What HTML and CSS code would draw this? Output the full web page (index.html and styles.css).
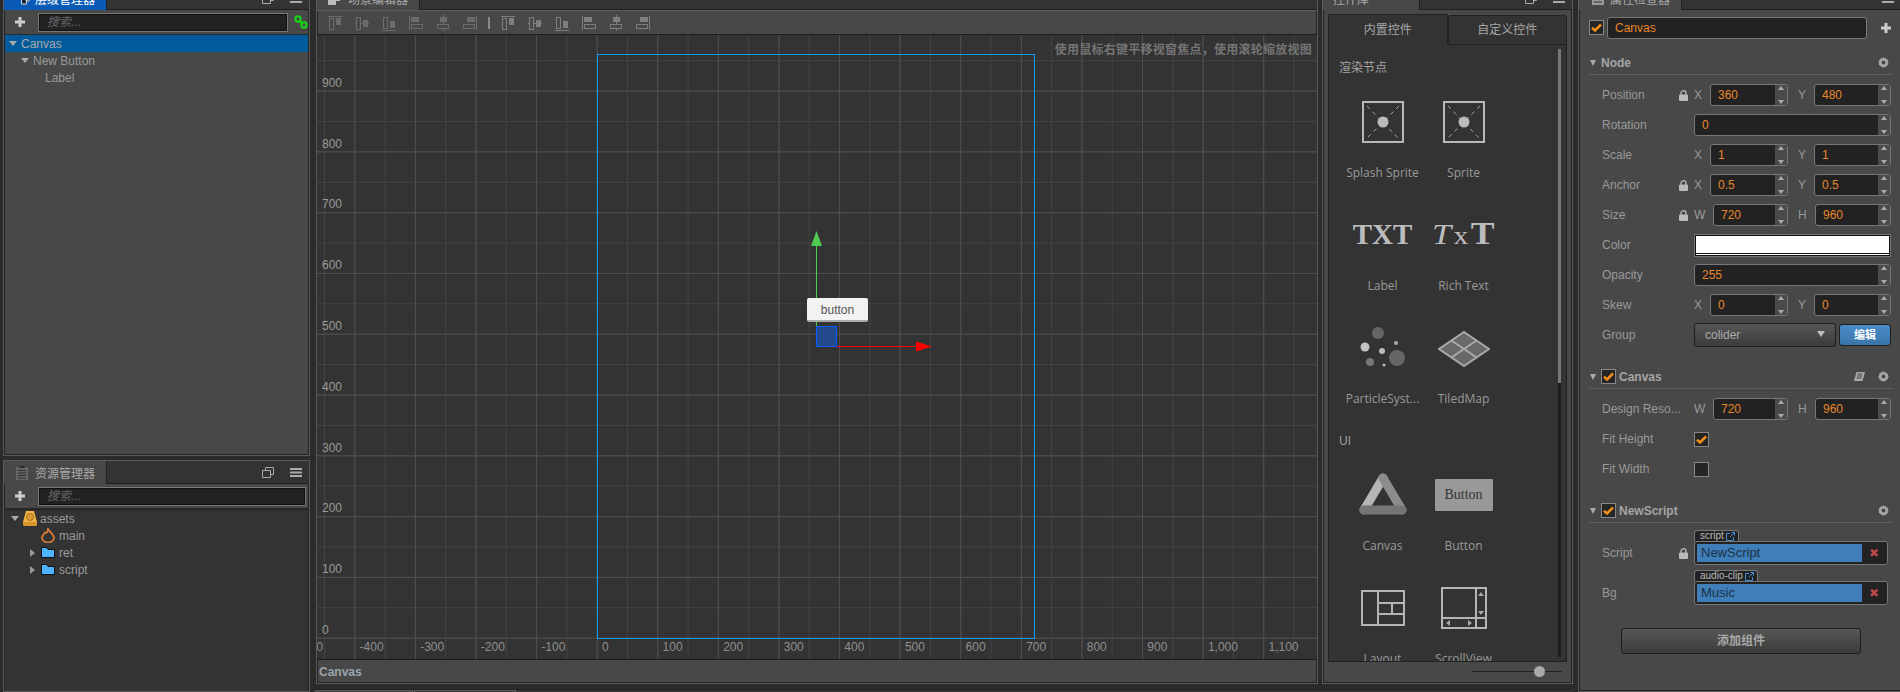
FILE: index.html
```html
<!DOCTYPE html>
<html lang="zh">
<head>
<meta charset="utf-8">
<title>Cocos Creator</title>
<link rel="stylesheet" href="styles.css">
</head>
<body>
<svg class="defs" width="0" height="0" aria-hidden="true">
  <defs>
    <symbol id="a-top" viewBox="0 0 16 16"><path d="M1 1.5h14" stroke="currentColor" fill="none"/><rect x="2.5" y="3.5" width="4" height="11" stroke="currentColor" fill="none"/><rect x="9" y="3" width="5" height="7" fill="currentColor"/></symbol>
    <symbol id="a-mid" viewBox="0 0 16 16"><path d="M1 8.5h14" stroke="currentColor" fill="none"/><rect x="2.5" y="2.5" width="4" height="12" stroke="currentColor" fill="#484848"/><rect x="9" y="5" width="5" height="7" fill="currentColor"/></symbol>
    <symbol id="a-bot" viewBox="0 0 16 16"><path d="M1 15.5h14" stroke="currentColor" fill="none"/><rect x="2.5" y="2.5" width="4" height="11" stroke="currentColor" fill="none"/><rect x="9" y="6" width="5" height="7" fill="currentColor"/></symbol>
    <symbol id="a-left" viewBox="0 0 16 16"><path d="M1.5 1v14" stroke="currentColor" fill="none"/><rect x="3" y="2" width="8" height="5" fill="currentColor"/><rect x="3.5" y="9.5" width="11" height="4" stroke="currentColor" fill="none"/></symbol>
    <symbol id="a-center" viewBox="0 0 16 16"><path d="M8.5 0v16" stroke="currentColor" fill="none"/><rect x="5" y="2" width="7" height="5" fill="currentColor"/><rect x="2.5" y="9.5" width="11" height="4" stroke="currentColor" fill="#484848"/></symbol>
    <symbol id="a-right" viewBox="0 0 16 16"><path d="M14.5 1v14" stroke="currentColor" fill="none"/><rect x="5" y="2" width="8" height="5" fill="currentColor"/><rect x="1.5" y="9.5" width="11" height="4" stroke="currentColor" fill="none"/></symbol>
    <symbol id="popout" viewBox="0 0 12 11"><path d="M3.5 3V.5h8v7H9M.5 3.5h8v7h-8z" stroke="currentColor" fill="none"/></symbol>
    <symbol id="burger" viewBox="0 0 12 9"><path d="M0 0h12v2H0zM0 3.500h12v2H0zM0 7h12v2H0z" fill="currentColor"/></symbol>
    <symbol id="plus" viewBox="0 0 10 10"><path d="M3.500 0h3v3.500H10v3H6.500V10h-3V6.500H0v-3h3.500z" fill="currentColor"/></symbol>
    <symbol id="gear" viewBox="0 0 12 12"><path d="M6 0l1 1.600 1.800-.5.500 1.800 1.800.5-.5 1.800L12 6l-1.400.9.500 1.800-1.800.5-.5 1.800-1.800-.5L6 12l-1-1.500-1.800.5-.5-1.800-1.800-.5.500-1.800L0 6l1.400-.9-.5-1.800 1.800-.5.500-1.800 1.800.5z M6 3.800a2.200 2.200 0 1 0 .01 0z" fill="currentColor" fill-rule="evenodd"/></symbol>
    <symbol id="lock" viewBox="0 0 9 11"><path d="M2 5V3.200a2.500 2.500 0 0 1 5 0V5" stroke="currentColor" stroke-width="1.300" fill="none"/><rect y="4.500" width="9" height="6.500" rx="1" fill="currentColor"/></symbol>
    <symbol id="check" viewBox="0 0 13 13"><path d="M2 6.800l3 2.700L11 3.500" stroke="#f28c1e" stroke-width="2.600" fill="none"/></symbol>
    <symbol id="folder" viewBox="0 0 14 11"><path d="M.5.500h5l1.500 2h6.500v8H.5z" fill="#4db4fb" stroke="#111"/></symbol>
    <symbol id="ext" viewBox="0 0 9 9"><path d="M4 1.500H.5v7h7V5M4 5l4.500-4.500M5.500.500h3v3" stroke="#3f8fd6" fill="none"/></symbol>
    <symbol id="sprite" viewBox="0 0 42 42"><rect x="1" y="1" width="40" height="40" fill="none" stroke="#b8b8b8" stroke-width="2"/><path d="M5 5l31 32M37 5L5 37" stroke="#a8a8a8" stroke-dasharray="4 4" fill="none"/><circle cx="21" cy="21" r="5.500" fill="#bbb"/></symbol>
  </defs>
</svg>

<div class="app">
  <div class="col-left">
    <section class="panel hierarchy">
      <div class="tabbar">
        <div class="tab tab-active">
          <svg class="tab-icon" width="9" height="12" viewBox="0 0 9 12"><path d="M.5 1h5v10h-5zM5 5h3v3H5z" fill="#123" stroke="#ddd"/></svg>
          <span>层级管理器</span>
        </div>
        <div class="tab-tools"><svg class="t-pop"><use href="#popout"/></svg><svg class="t-bur"><use href="#burger"/></svg></div>
      </div>
      <div class="toolbar">
        <svg class="plus"><use href="#plus"/></svg>
        <div class="search search-short">搜索...</div>
        <svg class="link" width="14" height="14" viewBox="0 0 14 14"><circle cx="4" cy="4" r="2.700" fill="none" stroke="#16d816" stroke-width="2"/><circle cx="10" cy="10" r="2.700" fill="none" stroke="#16d816" stroke-width="2"/><path d="M5.500 5.500l3 3" stroke="#16d816" stroke-width="2"/></svg>
      </div>
      <div class="tree">
        <div class="tree-row selected"><i class="caret"></i><span>Canvas</span></div>
        <div class="tree-row depth1"><i class="caret"></i><span>New Button</span></div>
        <div class="tree-row depth2"><span>Label</span></div>
      </div>
    </section>

    <section class="panel assets">
      <div class="tabbar">
        <div class="tab">
          <svg class="tab-icon" width="12" height="14" viewBox="0 0 12 14"><path d="M0 1h12v13H0z" fill="#666"/><path d="M3 0h6v2H3zM2 4h8v1H2zM2 6.500h8v1H2zM2 9h8v1H2zM2 11.500h8v1H2z" fill="#2e2e2e"/></svg>
          <span>资源管理器</span>
        </div>
        <div class="tab-tools"><svg class="t-pop"><use href="#popout"/></svg><svg class="t-bur"><use href="#burger"/></svg></div>
      </div>
      <div class="toolbar">
        <svg class="plus"><use href="#plus"/></svg>
        <div class="search">搜索...</div>
      </div>
      <div class="tree tree-dark">
        <div class="tree-row a0"><i class="caret"></i>
          <svg class="a-icon" width="14" height="15" viewBox="0 0 14 15"><path d="M3 0h8l3 11v2l-1 2H1l-1-2V11z" fill="#efb343"/><path d="M0 11h14v2l-1 2H1l-1-2z" fill="#d8962d"/><circle cx="7" cy="6" r="3.500" fill="#d99a33" stroke="#a87320"/></svg>
          <span>assets</span></div>
        <div class="tree-row a1"><svg class="a-icon" width="14" height="15" viewBox="0 0 14 15"><path d="M7 1C8.500 4 13 6.500 13 10a6 4.500 0 0 1-12 0C1 7 3.500 6 4 4.500 5.500 6 6.500 4 7 1z" fill="none" stroke="#dd7a35" stroke-width="1.700"/></svg><span>main</span></div>
        <div class="tree-row a1 closed"><i class="caret-r"></i><svg class="a-icon" width="14" height="11"><use href="#folder"/></svg><span>ret</span></div>
        <div class="tree-row a1 closed"><i class="caret-r"></i><svg class="a-icon" width="14" height="11"><use href="#folder"/></svg><span>script</span></div>
      </div>
    </section>
  </div>

  <div class="col-mid">
    <div class="mid-row">
      <section class="panel scene-panel">
        <div class="tabbar">
          <div class="tab">
            <svg class="tab-icon" width="12" height="12" viewBox="0 0 12 12"><path d="M0 0h12v8H8v4H0z" fill="#bbb"/></svg>
            <span>场景编辑器</span>
          </div>
        </div>
        <div class="toolbar scene-tools">
          <svg class="al dim"><use href="#a-top"/></svg>
          <svg class="al dim"><use href="#a-mid"/></svg>
          <svg class="al dim"><use href="#a-bot"/></svg>
          <svg class="al dim"><use href="#a-left"/></svg>
          <svg class="al dim"><use href="#a-center"/></svg>
          <svg class="al dim"><use href="#a-right"/></svg>
          <i class="tool-sep"></i>
          <svg class="al"><use href="#a-top"/></svg>
          <svg class="al"><use href="#a-mid"/></svg>
          <svg class="al"><use href="#a-bot"/></svg>
          <svg class="al"><use href="#a-left"/></svg>
          <svg class="al"><use href="#a-center"/></svg>
          <svg class="al"><use href="#a-right"/></svg>
        </div>
        <div class="scene">
          <div class="ruler-y"><span>900</span><span>800</span><span>700</span><span>600</span><span>500</span><span>400</span><span>300</span><span>200</span><span>100</span><span>0</span></div>
          <div class="ruler-x"><span>-500</span><span>-400</span><span>-300</span><span>-200</span><span>-100</span><span>0</span><span>100</span><span>200</span><span>300</span><span>400</span><span>500</span><span>600</span><span>700</span><span>800</span><span>900</span><span>1,000</span><span>1,100</span></div>
          <div class="design-rect"></div>
          <svg class="gizmo" width="130" height="130" viewBox="0 0 130 130">
            <path d="M10.500 14v101" stroke="#4fcb52" fill="none"/>
            <path d="M10.500 0L16 15H5z" fill="#4fcb52"/>
            <path d="M10 115.500h102" stroke="#f00" fill="none"/>
            <path d="M126 115.500L110 110.500v10z" fill="#f00"/>
          </svg>
          <div class="node-btn">button</div>
          <div class="node-anchor"></div>
          <div class="scene-hint">使用鼠标右键平移视窗焦点，使用滚轮缩放视图</div>
        </div>
        <div class="statusbar">Canvas</div>
      </section>

      <section class="panel widgets">
        <div class="tabbar">
          <div class="tab tab-widget"><span>控件库</span></div>
          <div class="tab-tools"><svg class="t-pop"><use href="#popout"/></svg><svg class="t-bur"><use href="#burger"/></svg></div>
        </div>
        <div class="w-tabs">
          <div class="w-tab w-tab-on">内置控件</div>
          <div class="w-tab">自定义控件</div>
        </div>
        <div class="w-body">
          <i class="w-scroll"></i>
          <h4 class="w-title">渲染节点</h4>
          <div class="w-grid">
            <div class="w-item"><div class="w-icon"><svg width="42" height="42"><use href="#sprite"/></svg></div><p>Splash Sprite</p></div>
            <div class="w-item"><div class="w-icon"><svg width="42" height="42"><use href="#sprite"/></svg></div><p>Sprite</p></div>
            <div class="w-item"><div class="w-icon"><span class="txt">TXT</span></div><p>Label</p></div>
            <div class="w-item"><div class="w-icon"><span class="rich"><em>T</em><small>x</small><b>T</b></span></div><p>Rich Text</p></div>
            <div class="w-item"><div class="w-icon"><svg class="nudge" width="48" height="48" viewBox="0 0 48 48"><circle cx="19" cy="8" r="6" fill="#666"/><circle cx="6" cy="22" r="4.500" fill="#c4c4c4"/><circle cx="23" cy="26" r="3" fill="#bbb"/><circle cx="37" cy="18" r="2" fill="#aaa"/><circle cx="38" cy="33" r="8" fill="#666"/><circle cx="11" cy="37" r="4" fill="#777"/><circle cx="25" cy="40" r="1.500" fill="#bbb"/></svg></div><p>ParticleSyst...</p></div>
            <div class="w-item"><div class="w-icon"><svg class="nudge" width="52" height="36" viewBox="0 0 52 36"><path d="M26 1l25 17-25 17L1 18z" fill="#696969" stroke="#aaa" stroke-width="2"/><path d="M13.500 9.500l25 17M38.500 9.500l-25 17" stroke="#aaa" stroke-width="2"/></svg></div><p>TiledMap</p></div>
          </div>
          <h4 class="w-title w-title-2">UI</h4>
          <div class="w-grid">
            <div class="w-item"><div class="w-icon"><svg width="48" height="44" viewBox="0 0 48 44"><path d="M5 37L24 5" stroke="#b5b5b5" stroke-width="9" stroke-linecap="round"/><path d="M24 5l19 32" stroke="#8c8c8c" stroke-width="9" stroke-linecap="round"/><path d="M5 37h38" stroke="#757575" stroke-width="9" stroke-linecap="round"/></svg></div><p>Canvas</p></div>
            <div class="w-item"><div class="w-icon"><span class="btn-icon">Button</span></div><p>Button</p></div>
            <div class="w-item"><div class="w-icon"><svg width="44" height="36" viewBox="0 0 44 36"><path d="M1 1h42v34H1zM17 1v34M17 13h26M17 24h26M31 13v11" fill="none" stroke="#b5b5b5" stroke-width="2"/></svg></div><p>Layout</p></div>
            <div class="w-item"><div class="w-icon"><svg width="46" height="42" viewBox="0 0 46 42"><path d="M1 1h44v40H1zM35 1v40M1 31h44" fill="none" stroke="#b5b5b5" stroke-width="2"/><path d="M40 5l3 4h-6zM40 28l-3-4h6zM5 36l4-3v6zM31 36l-4-3v6z" fill="#aaa"/></svg></div><p>ScrollView</p></div>
          </div>
        </div>
        <div class="w-foot"><div class="slider"><i class="thumb"></i></div></div>
      </section>
    </div>
    <div class="bottom-tabs"><i class="b-tab b1"></i><i class="b-tab b2"></i></div>
  </div>

  <section class="panel inspector">
    <div class="tabbar">
      <div class="tab">
        <svg class="tab-icon" width="12" height="12" viewBox="0 0 12 12"><path d="M0 0h12v12H0z" fill="#999"/><path d="M2 3h8M2 6h8M2 9h8" stroke="#333"/></svg>
        <span>属性检查器</span>
      </div>
      <div class="tab-tools"><svg class="t-bur"><use href="#burger"/></svg></div>
    </div>
    <div class="i-head">
      <span class="cb on"><svg><use href="#check"/></svg></span>
      <div class="name-input">Canvas</div>
      <svg class="plus i-plus"><use href="#plus"/></svg>
    </div>

    <div class="sec-head">
      <i class="sec-arrow"></i><b>Node</b>
      <svg class="gear"><use href="#gear"/></svg>
    </div>
    <div class="sec-body">
      <div class="row"><div class="lab"><span>Position</span><svg class="lock"><use href="#lock"/></svg></div><div class="val"><span class="ax">X</span><div class="num w78"><span>360</span><i class="spin"></i></div><span class="ax ax2">Y</span><div class="num w77"><span>480</span><i class="spin"></i></div></div></div>
      <div class="row"><div class="lab"><span>Rotation</span></div><div class="val"><div class="num wfull"><span>0</span><i class="spin"></i></div></div></div>
      <div class="row"><div class="lab"><span>Scale</span></div><div class="val"><span class="ax">X</span><div class="num w78"><span>1</span><i class="spin"></i></div><span class="ax ax2">Y</span><div class="num w77"><span>1</span><i class="spin"></i></div></div></div>
      <div class="row"><div class="lab"><span>Anchor</span><svg class="lock"><use href="#lock"/></svg></div><div class="val"><span class="ax">X</span><div class="num w78"><span>0.5</span><i class="spin"></i></div><span class="ax ax2">Y</span><div class="num w77"><span>0.5</span><i class="spin"></i></div></div></div>
      <div class="row"><div class="lab"><span>Size</span><svg class="lock"><use href="#lock"/></svg></div><div class="val"><span class="ax axw">W</span><div class="num w75"><span>720</span><i class="spin"></i></div><span class="ax ax2 axh">H</span><div class="num w76"><span>960</span><i class="spin"></i></div></div></div>
      <div class="row"><div class="lab"><span>Color</span></div><div class="val"><div class="color"></div></div></div>
      <div class="row"><div class="lab"><span>Opacity</span></div><div class="val"><div class="num wfull"><span>255</span><i class="spin"></i></div></div></div>
      <div class="row"><div class="lab"><span>Skew</span></div><div class="val"><span class="ax">X</span><div class="num w78"><span>0</span><i class="spin"></i></div><span class="ax ax2">Y</span><div class="num w77"><span>0</span><i class="spin"></i></div></div></div>
      <div class="row"><div class="lab"><span>Group</span></div><div class="val"><div class="select">colider<i class="sel-arrow"></i></div><div class="edit-btn">编辑</div></div></div>
    </div>

    <div class="sec-head">
      <i class="sec-arrow"></i><span class="cb on"><svg><use href="#check"/></svg></span><b>Canvas</b>
      <svg class="book" width="11" height="11" viewBox="0 0 11 11"><path d="M2.500 1H11L8.500 10H0z" fill="#aaa"/><path d="M3.500 3h5M3 5h5M2.500 7h5" stroke="#484848"/></svg>
      <svg class="gear"><use href="#gear"/></svg>
    </div>
    <div class="sec-body">
      <div class="row"><div class="lab"><span>Design Reso...</span></div><div class="val"><span class="ax axw">W</span><div class="num w75"><span>720</span><i class="spin"></i></div><span class="ax ax2 axh">H</span><div class="num w76"><span>960</span><i class="spin"></i></div></div></div>
      <div class="row"><div class="lab"><span>Fit Height</span></div><div class="val"><span class="cb on"><svg><use href="#check"/></svg></span></div></div>
      <div class="row"><div class="lab"><span>Fit Width</span></div><div class="val"><span class="cb"></span></div></div>
    </div>

    <div class="sec-head">
      <i class="sec-arrow"></i><span class="cb on"><svg><use href="#check"/></svg></span><b>NewScript</b>
      <svg class="gear"><use href="#gear"/></svg>
    </div>
    <div class="sec-body sec-script">
      <div class="row row-asset"><div class="lab"><span>Script</span><svg class="lock"><use href="#lock"/></svg></div>
        <div class="val asset"><div class="asset-tag">script<svg width="9" height="9"><use href="#ext"/></svg></div><div class="asset-field"><span class="asset-name">NewScript</span><span class="asset-x">✖</span></div></div></div>
      <div class="row row-asset"><div class="lab"><span>Bg</span></div>
        <div class="val asset"><div class="asset-tag">audio-clip<svg width="9" height="9"><use href="#ext"/></svg></div><div class="asset-field"><span class="asset-name">Music</span><span class="asset-x">✖</span></div></div></div>
    </div>
    <div class="add-comp">添加组件</div>
  </section>
</div>
</body>
</html>
```

FILE: styles.css
```css
* { box-sizing: border-box; }
html, body { margin: 0; padding: 0; height: 692px; overflow: hidden; background: #2b2b2b; }
body { font: 12px "Liberation Sans", "Noto Sans CJK SC", sans-serif; color: #999; }
.defs { position: absolute; }
svg { display: block; flex: none; }
p, h4 { margin: 0; font-weight: normal; }
i { display: block; font-style: normal; }

.app { display: flex; height: 706px; margin-top: -14px; padding-left: 3px; }
.col-left { width: 307px; display: flex; flex-direction: column; gap: 4px; flex: none; }
.col-mid { width: 1257px; margin-left: 6px; flex: none; display: flex; flex-direction: column; gap: 5px; }
.mid-row { display: flex; gap: 4px; height: 698px; flex: none; }

.panel { background: #484848; border: 1px solid #5a5a5a; display: flex; flex-direction: column; overflow: hidden; box-shadow: 0 0 0 1px #242424 inset; }
.hierarchy { height: 470px; flex: none; }
.assets { flex: 1; min-height: 0; }
.scene-panel { width: 1002px; flex: none; }
.widgets { width: 251px; flex: none; }
.inspector { width: 323px; flex: none; margin-left: 5px; border-right: 0; }

.tabbar { height: 23px; flex: none; background: #333; border-bottom: 1px solid #1e1e1e; display: flex; position: relative; }
.tab { width: 103px; height: 23px; background: #484848; display: flex; align-items: center; color: #aaa; padding-left: 13px; border-right: 1px solid #222; }
.tab span { position: absolute; left: 31px; white-space: nowrap; }
.tab-active { background: #0a5bb8; color: #fff; }
.tab-icon { margin-left: 4px; }
.tab-tools { margin-left: auto; display: flex; align-items: center; gap: 16px; padding-right: 7px; color: #aaa; }
.t-pop { width: 12px; height: 11px; }
.t-bur { width: 12px; height: 9px; }
.assets .tab { padding-left: 8px; }
.scene-panel .tab { padding-left: 7px; }
.tab-widget { padding-left: 0; width: 97px; }
.tab-widget span { left: 10px; }
.inspector .tab { padding-left: 9px; }
.inspector .tab span { left: 31px; }

.toolbar { height: 25px; flex: none; display: flex; align-items: center; padding-left: 11px; border-bottom: 1px solid #2a2a2a; }
.plus { width: 10px; height: 10px; color: #ccc; flex: none; }
.search { margin-left: 13px; width: 268px; height: 19px; background: #222; border: 1px solid #777; outline: 1px solid #111; outline-offset: -2px; color: #666; font-style: italic; padding-left: 8px; line-height: 17px; }
.search-short { width: 250px; }
.link { margin-left: 6px; }

.tree { flex: 1; padding-top: 0; }
.tree-dark { background: #333; margin: 0 1px; border-top: 1px solid #222; }
.tree-row { height: 17px; display: flex; align-items: center; position: relative; padding-left: 6px; }
.selected { background: #005a9c; color: #aaa; margin: 0 1px; padding-left: 4px; }
.caret { width: 0; height: 0; border: 4px solid transparent; border-top: 5px solid #aaa; border-bottom: 0; margin-right: 4px; }
.caret-r { width: 0; height: 0; border: 4px solid transparent; border-left: 5px solid #999; border-right: 0; position: absolute; left: 25px; }
.depth1 { padding-left: 17px; }
.depth2 { padding-left: 41px; }
.a0 { padding-left: 6px; }
.a0 .a-icon { margin: 0 3px 0 0; }
.a1 { padding-left: 36px; }
.a1 .a-icon { margin-right: 4px; }

.scene-tools { padding-left: 10px; gap: 11px; border-bottom: 1px solid #1c1c1c; border-top: 1px solid #5c5c5c; color: #7e7e7e; }
.al { width: 16px; height: 16px; }
.dim { color: #6c6c6c; }
.tool-sep { width: 2px; height: 12px; background: #8a8a8a; margin: 0 -1px 0 -1px; }

.scene {
  flex: 1; position: relative; overflow: hidden;
  background-color: #333;
  background-image:
    linear-gradient(to right, #4e4e4e 1px, transparent 1px),
    linear-gradient(to bottom, #4e4e4e 1px, transparent 1px),
    linear-gradient(to right, #434343 1px, transparent 1px),
    linear-gradient(to bottom, #434343 1px, transparent 1px);
  background-size: 60.6px 100%, 100% 60.8px, 30.3px 100%, 100% 30.4px;
  background-position: 37.3px 0, 0 55.6px, 7px 0, 0 25.2px;
}
.ruler-y { position: absolute; left: 5px; bottom: 20px; display: flex; flex-direction: column; color: #999; }
.ruler-y span { height: 60.8px; display: flex; align-items: flex-end; line-height: 18px; }
.ruler-x { position: absolute; left: -24px; bottom: 3px; display: flex; color: #8f8f8f; white-space: nowrap; }
.ruler-x span { flex: 0 0 60.6px; padding-left: 6px; line-height: 18px; }
.design-rect { position: absolute; left: 280px; top: 19px; width: 438px; height: 585px; border: 1px solid #0c9bff; }
.gizmo { position: absolute; left: 489px; top: 196px; }
.node-btn { position: absolute; left: 490px; top: 263px; width: 61px; height: 24px; background: #f2f2f2; border-radius: 2px; border-bottom: 2px solid #aaa; color: #555; text-align: center; line-height: 25px; }
.node-anchor { position: absolute; left: 499px; top: 291px; width: 21px; height: 21px; background: #24498c; border: 1px solid #0b5cff; }
.scene-hint { position: absolute; right: 5px; top: 7px; font-weight: 700; color: #757575; white-space: nowrap; line-height: 16px; letter-spacing: .25px; }

.statusbar { height: 24px; flex: none; line-height: 24px; padding-left: 2px; font-weight: 700; color: #9aa4ad; border-top: 1px solid #1c1c1c; margin-bottom: 0; }

.w-tabs { display: flex; margin: 4px 5px 0; height: 31px; flex: none; }
.w-tab { flex: 1; text-align: center; line-height: 29px; font-size: 12px; color: #a5a5a5; background: #333; border: 1px solid #222; border-radius: 2px 2px 0 0; margin-top: 1px; }
.w-tab-on { border-bottom: 0; margin-top: 0; line-height: 31px; background: #333; }
.w-body { flex: none; height: 617px; margin: 0 5px; background: #333; border: 1px solid #222; border-top: 0; position: relative; overflow: hidden; font-family: "Open Sans", "Noto Sans CJK SC", sans-serif; }
.w-scroll { position: absolute; right: 5px; top: 4px; width: 3px; height: 608px; background: linear-gradient(to bottom, #777 0, #777 334px, #1c1c1c 334px); }
.w-title { height: 22px; line-height: 22px; margin: 11px 0 7px 10px; color: #a8a8a8; font-size: 12px; font-family: "Noto Sans CJK SC", sans-serif; }
.w-title-2 { margin-top: 6px; margin-bottom: 6px; font-family: "Open Sans", sans-serif; }
.w-grid { display: grid; grid-template-columns: 81px 81px; padding-left: 13px; }
.w-item { height: 113px; text-align: center; }
.w-icon { height: 74px; display: flex; align-items: center; justify-content: center; }
.w-item p { margin-top: 5px; line-height: 18px; font-size: 12px; color: #999; white-space: nowrap; }
.nudge { margin-top: 2px; }
.txt { font: 700 29px/1 "Liberation Serif", serif; color: #bcbcbc; margin-top: -2px; }
.rich { font-family: "Liberation Serif", serif; color: #bcbcbc; display: flex; align-items: baseline; transform: scaleX(1.15); margin-top: -2px; }
.rich em { font-size: 30px; }
.rich small { font-size: 26px; margin: 0 2px; }
.rich b { font-size: 31px; }
.btn-icon { width: 58px; height: 32px; background: #999; border-radius: 1px; color: #333; font: 14px/32px "Liberation Serif", serif; }
.w-foot { flex: 1; position: relative; }
.slider { position: absolute; left: 149px; top: 9px; width: 90px; height: 1px; background: #222; }
.thumb { position: absolute; left: 62px; top: -5px; width: 11px; height: 11px; border-radius: 50%; background: #aaa; }

.i-head { height: 41px; flex: none; display: flex; align-items: center; padding: 0 0 6px 10px; }
.cb { width: 15px; height: 15px; background: #252525; border: 1px solid #888; display: flex; align-items: center; justify-content: center; flex: none; }
.cb svg { width: 13px; height: 13px; }
.name-input { margin-left: 3px; width: 260px; height: 22px; line-height: 20px; background: #222; border: 1px solid #777; border-radius: 3px; padding-left: 7px; color: #e8862a; }
.i-plus { margin-left: 14px; width: 10px; height: 10px; }
.sec-head { height: 24px; flex: none; margin: 0 8px 0 10px; border-bottom: 1px solid #5e5e5e; display: flex; align-items: center; color: #a5a5a5; }
.sec-head b { margin-left: 4px; }
.sec-arrow { width: 0; height: 0; border: 3.5px solid transparent; border-top: 6px solid #aaa; border-bottom: 0; margin-left: 1px; margin-right: 1px; }
.sec-head .cb { margin-left: 4px; }
.sec-head .cb + b { margin-left: 3px; }
.gear { width: 11px; height: 11px; color: #aaa; margin-left: auto; margin-right: 4px; }
.book { margin-left: auto; margin-right: 13px; }
.book + .gear { margin-left: 0; }
.sec-body { padding: 5px 0 15px; }
.row { height: 30px; display: flex; align-items: center; padding-left: 23px; }
.lab { width: 92px; flex: none; display: flex; align-items: center; justify-content: space-between; padding-right: 6px; color: #999; white-space: nowrap; }
.lock { width: 9px; height: 11px; color: #bbb; }
.val { display: flex; align-items: center; width: 197px; flex: none; }
.ax { width: 16px; flex: none; color: #999; }
.ax2 { margin-left: 10px; }
.axw { width: 19px; }
.axh { width: 17px; }
.num { height: 22px; background: #222; border: 1px solid #777; border-radius: 3px; display: flex; align-items: center; overflow: hidden; color: #e8862a; padding-left: 7px; flex: none; }
.num span { flex: 1; }
.w78 { width: 78px; } .w77 { width: 77px; } .w75 { width: 75px; } .w76 { width: 76px; } .wfull { width: 197px; }
.spin { width: 12px; height: 20px; flex: none; position: relative; background: #4b4b4b; }
.spin::before, .spin::after { content: ""; position: absolute; left: 3px; border: 3px solid transparent; }
.spin::before { top: 1px; border-bottom: 4px solid #aaa; border-top: 0; }
.spin::after { bottom: 1px; border-top: 4px solid #aaa; border-bottom: 0; }
.color { width: 197px; height: 23px; background: #fff; border: 1px solid #777; outline: 1px solid #111; outline-offset: -2px; position: relative; }
.color::after { content: ""; position: absolute; left: 0; right: 0; bottom: 2px; height: 1px; background: #111; }
.select { width: 142px; height: 24px; line-height: 22px; background: linear-gradient(#565656, #3c3c3c); border: 1px solid #1e1e1e; border-radius: 3px; padding-left: 10px; position: relative; color: #aaa; }
.sel-arrow { position: absolute; right: 10px; top: 7px; border: 4px solid transparent; border-top: 6px solid #bbb; border-bottom: 0; }
.edit-btn { margin-left: 3px; width: 52px; height: 22px; line-height: 20px; text-align: center; background: linear-gradient(#4a8cc8, #3974a8); border: 1px solid #1e1e1e; border-radius: 3px; color: #fff; font-size: 11px; font-weight: 700; }
.sec-script { padding: 3px 0 0; }
.row-asset { height: 40px; align-items: flex-end; padding-bottom: 1px; }
.row-asset .lab { height: 24px; }
.asset { display: block; width: 194px; }
.asset-tag { width: max-content; height: 11px; padding: 0 3px 0 5px; display: flex; align-items: center; gap: 2px; background: #222; border: 1px solid #777; border-bottom: 0; border-radius: 3px 3px 0 0; color: #bbb; font-size: 10px; line-height: 10px; }
.asset-field { height: 24px; background: #222; border: 1px solid #777; border-radius: 3px; padding: 2px; display: flex; align-items: stretch; }
.asset-name { width: 165px; background: #3f7eb8; color: #1b3147; padding-left: 4px; line-height: 18px; font-size: 13px; }
.asset-x { flex: 1; text-align: center; color: #b8474a; font-size: 12px; line-height: 18px; }
.add-comp { margin: 22px 0 0 42px; width: 240px; height: 26px; line-height: 24px; text-align: center; background: linear-gradient(#565656, #3c3c3c); border: 1px solid #1e1e1e; border-radius: 3px; color: #a8a8a8; font-weight: 700; flex: none; }

.bottom-tabs { display: flex; gap: 1px; flex: 1; background: #333; border-top: 1px solid #222; }
.b-tab { height: 20px; background: #484848; border: 1px solid #5a5a5a; }
.b1 { width: 98px; margin-left: -1px; }
.b2 { width: 102px; background: #3c3c3c; }
```
